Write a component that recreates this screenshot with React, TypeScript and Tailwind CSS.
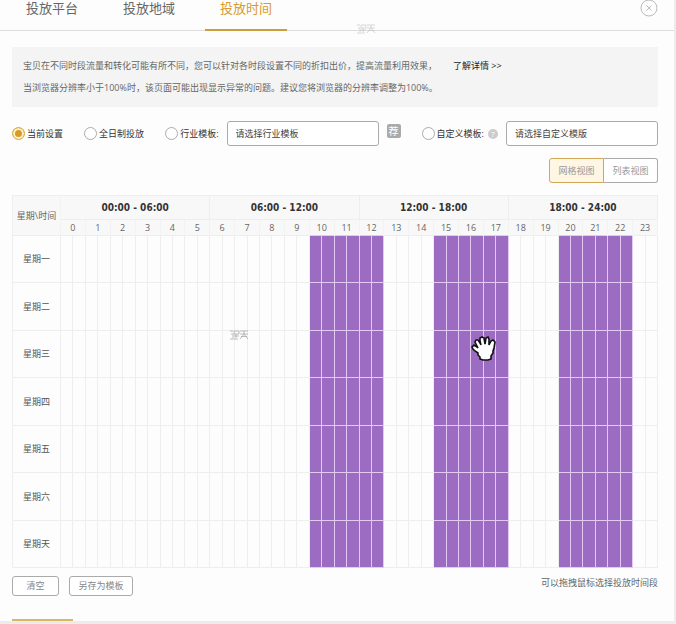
import React, { useState } from 'react'
import clsx from 'clsx'

const tabs = ['投放平台', '投放地域', '投放时间']
const periods = ['00:00 - 06:00', '06:00 - 12:00', '12:00 - 18:00', '18:00 - 24:00']
const days = ['星期一', '星期二', '星期三', '星期四', '星期五', '星期六', '星期天']
const hours = Array.from({ length: 24 }, (_, i) => i)
// half-hour slots
const slots = Array.from({ length: 48 }, (_, i) => i)
const activeHours = [10, 11, 12, 15, 16, 17, 20, 21, 22]

const radioClass =
  'size-[13px] shrink-0 appearance-none rounded-full border border-[#aaa] bg-white checked:border-[#e0ac3e] checked:bg-[#d9992b] checked:shadow-[inset_0_0_0_2px_#fff3c8]'
const selectClass =
  'h-[25px] w-[152px] appearance-none rounded-[3px] border border-[#aaa] bg-white px-2 text-[9px] text-[#444]'
const buttonClass = 'h-5 rounded-[3px] border border-[#aaa] bg-white text-[9px] text-[#888]'

const HandCursor = () => (
  <svg viewBox="0 0 26 26" className="pointer-events-none absolute -top-[18px] left-0 size-[26px]" aria-hidden="true">
    <path
      d="M9 23V21L7 19V17L4 15L2 13L1 11L3 9L6 11L7 12L5 8L4 6L5 4L7 4L9 7L10 9L9 5L9 2L11 1L13 2L14 8L15 2L17 1L18 3L18 9L20 5L22 4L24 6L23 12L22 15V17L20 20V23L17 24H12Z"
      fill="#fff"
      stroke="#111"
      strokeWidth="1.6"
    />
  </svg>
)

const DragMark = ({ className }: { className: string }) => (
  <svg
    viewBox="0 0 20 10"
    className={clsx('pointer-events-none absolute h-[10px] w-5', className)}
    fill="none"
    stroke="currentColor"
    strokeWidth="0.8"
    aria-hidden="true"
  >
    <path d="M1 1h3M2 4h2v4M1 9h8M5 1h5v3H5zM5 6h5M7 4v4M11 1h8M11 4h8M15 1v3l-4 5M15 4l4 5M12 6.500h6" />
  </svg>
)

const Header = () => (
  <nav className="relative flex h-[31px] items-stretch gap-[15px] border-b border-[#ddd] pr-[15px] pl-[11px]">
    {tabs.map((tab, i) => (
      <a
        key={tab}
        href="#"
        className={clsx(
          '-mb-px px-[15px] text-[13px] leading-4',
          i === 2 ? 'border-b-2 border-[#c9a03c] text-[#d9992b]' : 'text-[#666]'
        )}
      >
        {tab}
      </a>
    ))}
    <DragMark className="top-6 left-[356px] text-[#ccc]" />
    <button type="button" aria-label="关闭" className="ml-auto self-start text-[#bbb]">
      <svg viewBox="0 0 20 20" className="size-5" fill="none" stroke="currentColor">
        <circle cx="10" cy="8" r="8" />
        <path d="M7.500 5.500l5 5M12.500 5.500l-5 5" />
      </svg>
    </button>
  </nav>
)

const Filters = () => {
  const [mode, setMode] = useState('current')
  const radio = (value: string) => (
    <input
      type="radio"
      name="mode"
      className={radioClass}
      checked={mode === value}
      onChange={() => setMode(value)}
    />
  )

  return (
    <div className="flex items-center justify-between whitespace-nowrap text-[#333]">
      <label className="flex items-center gap-0.5">{radio('current')}当前设置</label>
      <label className="flex items-center gap-0.5">{radio('allday')}全日制投放</label>
      <div className="flex items-center gap-2">
        <label className="flex items-center gap-0.5">{radio('industry')}行业模板:</label>
        <select aria-label="行业模板" className={selectClass}>
          <option>请选择行业模板</option>
        </select>
        <span className="-mt-1.5 flex size-[14px] items-center justify-center rounded-[2px] bg-[#aaa] text-[10px] leading-none text-white">
          荐
        </span>
      </div>
      <div className="flex items-center gap-2">
        <div className="flex items-center gap-1">
          <label className="flex items-center gap-0.5">{radio('custom')}自定义模板:</label>
          <span className="flex size-[10px] items-center justify-center rounded-full bg-[#ccc] text-[8px] leading-none text-white">?</span>
        </div>
        <select aria-label="自定义模板" className={selectClass}>
          <option>请选择自定义模版</option>
        </select>
      </div>
    </div>
  )
}

const ScheduleTable = () => (
  <table className="w-full table-fixed border-collapse border border-[#eee] text-center">
    <colgroup>
      <col className="w-12" />
      {slots.map((s) => (
        <col key={s} />
      ))}
    </colgroup>
    <thead className="bg-[#f8f8f8]">
      <tr className="h-6">
        <th rowSpan={2} className="border-r border-[#f3f3f3] p-0 font-normal text-[#666]">
          星期\时间
        </th>
        {periods.map((p) => (
          <th
            key={p}
            colSpan={12}
            className="border border-[#eee] p-0 font-['DejaVu_Sans_Condensed','DejaVu_Sans',sans-serif] text-[10px] leading-none font-bold text-[#333]"
          >
            {p}
          </th>
        ))}
      </tr>
      <tr className="h-4">
        {hours.map((h) => (
          <th key={h} colSpan={2} className="border-x border-[#f3f3f3] p-0 leading-none font-normal text-[#666]">
            {h}
          </th>
        ))}
      </tr>
    </thead>
    <tbody>
      {days.map((day) => (
        <tr key={day} className="odd:h-[47px] even:h-12">
          <th className="border border-[#eee] p-0 font-normal text-[#555]">{day}</th>
          {slots.map((s) => {
            const active = activeHours.includes(Math.floor(s / 2))
            return (
              <td
                key={s}
                className={clsx('border p-0', active ? 'border-[#e2c8f2] bg-[#9c6cc3]' : 'border-[#eee]')}
              >
                {day === '星期三' && s === 33 && (
                  <div className="relative">
                    <HandCursor />
                  </div>
                )}
                {day === '星期三' && s === 13 && (
                  <div className="relative">
                    <DragMark className="-top-6 left-1.5 text-[#aaa]" />
                  </div>
                )}
              </td>
            )
          })}
        </tr>
      ))}
    </tbody>
  </table>
)

export default function App() {
  return (
    <div className="min-h-screen bg-[#ececec] pr-[2px] font-['Open_Sans','Noto_Sans_CJK_SC',sans-serif] text-[9px]">
      <div className="bg-[#fdfdfd]">
        <Header />
        <main className="pt-4 pr-4 pl-3">
          <section className="bg-[#f4f4f4] px-[11px] py-2 leading-[22px] text-[#666]">
            <p>
              宝贝在不同时段流量和转化可能有所不同，您可以针对各时段设置不同的折扣出价，提高流量利用效果，
              <a href="#" className="ml-4 text-[#222]">了解详情 &gt;&gt;</a>
            </p>
            <p>当浏览器分辨率小于100%时，该页面可能出现显示异常的问题。建议您将浏览器的分辨率调整为100%。</p>
          </section>

          <div className="mt-[14px]">
            <Filters />
          </div>

          <div className="mt-3 flex justify-end">
            <button type="button" className="h-[25px] w-[55px] rounded-l-[3px] border border-[#d3a75a] bg-[#fff6e3] text-[#999]">
              网格视图
            </button>
            <button type="button" className="h-[25px] w-[54px] rounded-r-[3px] border border-l-0 border-[#aaa] bg-white text-[#999]">
              列表视图
            </button>
          </div>

          <div className="mt-3">
            <ScheduleTable />
          </div>

          <div className="mt-2 flex items-start">
            <button type="button" className={clsx(buttonClass, 'w-[47px]')}>清空</button>
            <button type="button" className={clsx(buttonClass, 'ml-[10px] w-16')}>另存为模板</button>
            <p className="ml-auto text-[#666]">可以拖拽鼠标选择投放时间段</p>
          </div>

          <div className="mt-[23px] h-[2px] w-[61px] bg-[#d9b765]" />
        </main>
      </div>
    </div>
  )
}
